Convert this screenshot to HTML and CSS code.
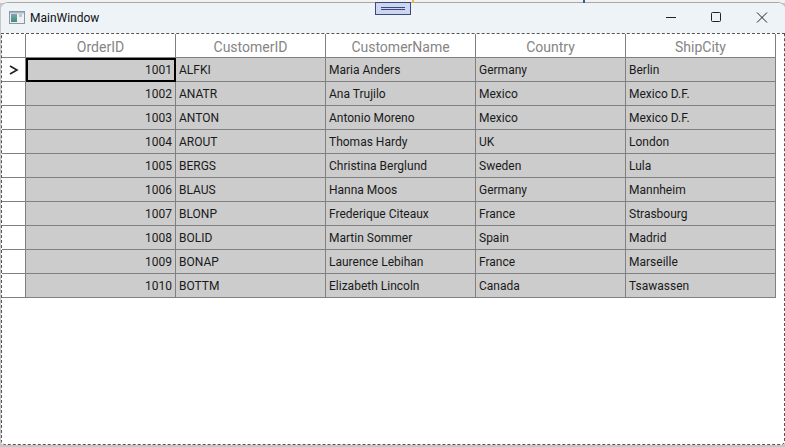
FILE: index.html

```html
<!DOCTYPE html>
<html lang="en">
<head>
  <meta charset="UTF-8">
  <title>MainWindow</title>
  <link rel="stylesheet" href="styles.css">
</head>
<body>
  <span class="speck speck-gold"></span>
  <span class="speck speck-blue"></span>
  <div class="grip"><span></span></div>
  <div class="window">
    <div class="titlebar">
      <svg class="app-icon" width="16" height="16" viewBox="0 0 16 16">
        <defs>
          <linearGradient id="pane" x1="0" y1="0" x2="0" y2="1">
            <stop offset="0" stop-color="#7fa3b8"/>
            <stop offset="1" stop-color="#3f8f72"/>
          </linearGradient>
        </defs>
        <rect x="0.5" y="1.5" width="15" height="12" fill="#eef1f2" stroke="#8f979e"/>
        <rect x="1" y="2" width="14" height="1.5" fill="#a9b6c0"/>
        <rect x="2" y="4" width="6" height="8" fill="url(#pane)"/>
        <rect x="10" y="4" width="3" height="3" fill="#b7c8d2"/>
      </svg>
      <span class="title">MainWindow</span>
      <div class="controls">
        <svg width="46" height="30" viewBox="0 0 46 30"><path d="M19 14.5h10" stroke="#222" fill="none"/></svg>
        <svg width="46" height="30" viewBox="0 0 46 30"><rect x="18.5" y="9.5" width="9" height="9" rx="1" stroke="#222" fill="none"/></svg>
        <svg width="46" height="30" viewBox="0 0 46 30"><path d="M18 9.5l10 10M28 9.5l-10 10" stroke="#222" fill="none"/></svg>
      </div>
    </div>
    <div class="client">
      <div class="grid">
        <div class="corner"></div>
        <div class="head">OrderID</div>
        <div class="head">CustomerID</div>
        <div class="head">CustomerName</div>
        <div class="head">Country</div>
        <div class="head">ShipCity</div>

        <div class="rowhead"><svg width="10" height="10" viewBox="0 0 10 10"><path d="M1 1l7 4-7 4" stroke="#222" stroke-width="1.6" fill="none"/></svg></div>
        <div class="cell num current">1001</div><div class="cell">ALFKI</div><div class="cell">Maria Anders</div><div class="cell">Germany</div><div class="cell">Berlin</div>

        <div class="rowhead"></div>
        <div class="cell num">1002</div><div class="cell">ANATR</div><div class="cell">Ana Trujilo</div><div class="cell">Mexico</div><div class="cell">Mexico D.F.</div>

        <div class="rowhead"></div>
        <div class="cell num">1003</div><div class="cell">ANTON</div><div class="cell">Antonio Moreno</div><div class="cell">Mexico</div><div class="cell">Mexico D.F.</div>

        <div class="rowhead"></div>
        <div class="cell num">1004</div><div class="cell">AROUT</div><div class="cell">Thomas Hardy</div><div class="cell">UK</div><div class="cell">London</div>

        <div class="rowhead"></div>
        <div class="cell num">1005</div><div class="cell">BERGS</div><div class="cell">Christina Berglund</div><div class="cell">Sweden</div><div class="cell">Lula</div>

        <div class="rowhead"></div>
        <div class="cell num">1006</div><div class="cell">BLAUS</div><div class="cell">Hanna Moos</div><div class="cell">Germany</div><div class="cell">Mannheim</div>

        <div class="rowhead"></div>
        <div class="cell num">1007</div><div class="cell">BLONP</div><div class="cell">Frederique Citeaux</div><div class="cell">France</div><div class="cell">Strasbourg</div>

        <div class="rowhead"></div>
        <div class="cell num">1008</div><div class="cell">BOLID</div><div class="cell">Martin Sommer</div><div class="cell">Spain</div><div class="cell">Madrid</div>

        <div class="rowhead"></div>
        <div class="cell num">1009</div><div class="cell">BONAP</div><div class="cell">Laurence Lebihan</div><div class="cell">France</div><div class="cell">Marseille</div>

        <div class="rowhead"></div>
        <div class="cell num">1010</div><div class="cell">BOTTM</div><div class="cell">Elizabeth Lincoln</div><div class="cell">Canada</div><div class="cell">Tsawassen</div>
      </div>
    </div>
  </div>
</body>
</html>
```

FILE: styles.css

```css
html, body { margin: 0; height: 100%; }
body { background: linear-gradient(#f1f1f1 0 3px, #c6c6c6 3px); font-family: Roboto, sans-serif; overflow: hidden; position: relative; padding-top: 2px; box-sizing: border-box; }
.speck { position: absolute; top: 0; height: 3px; width: 2px; }
.speck-gold { left: 412px; background: #e8b93c; }
.speck-blue { left: 583px; background: #2f5f9a; }
.grip { position: absolute; left: 375px; top: 2px; width: 36px; height: 13px; background: #cdd6ee; border: 1px solid #3a4a80; box-sizing: border-box; z-index: 2; display: flex; align-items: center; justify-content: center; }
.grip span { width: 24px; height: 3px; border-top: 1px solid #3a4a80; border-bottom: 1px solid #3a4a80; box-sizing: border-box; }
.window { height: 442px; margin-left: 1px; border-top: 1px solid #a8a8a8; border-radius: 7px 7px 4px 4px; background: #fff; overflow: hidden; display: flex; flex-direction: column; }
.titlebar { height: 30px; background: #eef3f8; display: flex; align-items: center; flex: none; }
.app-icon { margin-left: 8px; }
.title { margin-left: 5px; font-size: 12px; color: #111; }
.controls { margin-left: auto; display: flex; }
.client { flex: 1; border: 1px dashed #555; border-radius: 0 0 4px 4px; background: #fff; }
.grid { display: grid; grid-template-columns: 24px repeat(5, 150px); grid-template-rows: repeat(11, 24px); width: 774px; }
.corner, .rowhead { border-right: 1px solid #808080; border-bottom: 1px solid #808080; display: flex; align-items: center; justify-content: center; }
.head { border-right: 1px solid #808080; border-bottom: 1px solid #808080; color: #858585; font-size: 14px; padding-top: 2px; box-sizing: border-box; display: flex; align-items: center; justify-content: center; }
.cell { background: #cccccc; border-right: 1px solid #808080; border-bottom: 1px solid #808080; font-size: 12px; color: #1a1a1a; padding: 0 3px; display: flex; align-items: center; box-sizing: border-box; white-space: nowrap; }
.num { justify-content: flex-end; }
.current { outline: 2px solid #000; outline-offset: -2px; }
```
